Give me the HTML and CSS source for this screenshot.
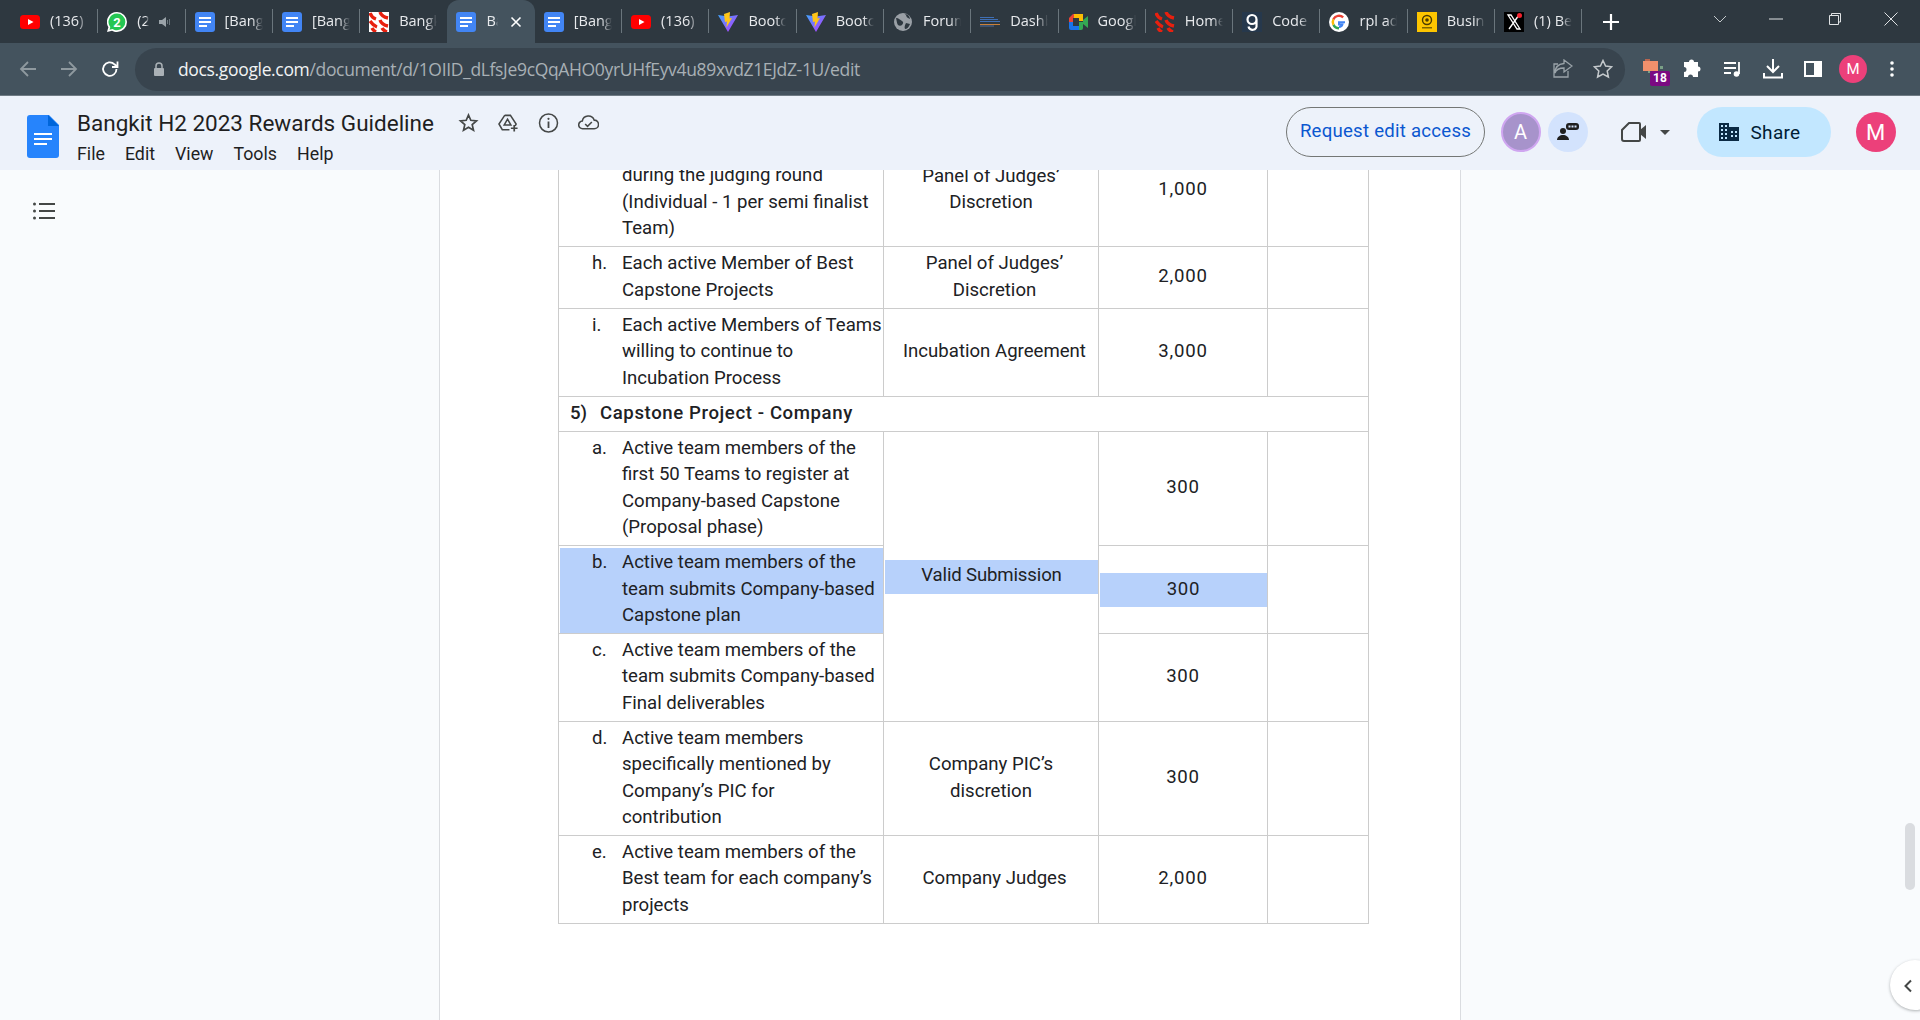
FILE: index.html
```html
<!DOCTYPE html>
<html lang="en">
<head>
<meta charset="utf-8">
<title>Bangkit H2 2023 Rewards Guideline</title>
<link rel="stylesheet" href="styles.css">
</head>
<body>
<svg class="defs" width="0" height="0" aria-hidden="true">
  <symbol id="f-yt" viewBox="0 0 20 20"><rect y="3" width="20" height="14" rx="3.5" fill="#f00"/><path d="M8 7l5.5 3L8 13z" fill="#fff"/></symbol>
  <symbol id="f-doc" viewBox="0 0 20 20"><rect width="20" height="20" rx="3" fill="#4285f4"/><path d="M4 5h12v2H4zM4 9h12v2H4zM4 13h8v2H4z" fill="#fff"/></symbol>
  <symbol id="f-vite" viewBox="0 0 20 20"><defs><linearGradient id="vg" x1="0" y1="0" x2="1" y2="1"><stop offset="0" stop-color="#41a5ff"/><stop offset="1" stop-color="#bd34fe"/></linearGradient></defs><path d="M0 3l10 1.5L20 3 10 20z" fill="url(#vg)"/><path d="M12 0L6 2l1 8 2-.5-.6 6L14 6l-2.500.5z" fill="#ffc517"/></symbol>
  <symbol id="f-x" viewBox="0 0 20 20"><rect width="20" height="20" fill="#000"/><path d="M4 3h3l9 14h-3zM15 3L5 17" fill="none" stroke="#fff" stroke-width="1.300"/><circle cx="15.500" cy="3.500" r="2.500" fill="#f4212e"/></symbol>
  <symbol id="f-bang" viewBox="0 0 20 20"><path d="M1 1c1 3 3 5 6 6M11 0c1 3 3 5 8 6M1 9c2 3 4 5 7 6M11 8c1 3 3 5 8 6M3 16c1 2 2 3 4 4M13 16c1 2 2 3 5 4" fill="none" stroke="#e8200f" stroke-width="3.400"/></symbol>
</svg>

<div class="tabstrip">
  <div class="tab"><svg class="fav"><use href="#f-yt"/></svg><span class="title">(136) YouTube</span></div>
  <div class="tab"><svg class="fav" viewBox="0 0 20 20"><path d="M10 0a10 10 0 0 1 0 20c-2 0-3.500-.5-5-1.300L0 20l1.400-4.800A10 10 0 0 1 10 0z" fill="#fff"/><path d="M10 1.600a8.300 8.300 0 0 1 0 16.700c-1.700 0-3.200-.5-4.500-1.300l-3 .8.800-2.900A8.300 8.300 0 0 1 10 1.600z" fill="#25c652"/><text x="10" y="14.500" class="wa">2</text></svg><span class="title short">(2) WhatsApp</span><svg class="speaker" viewBox="0 0 12 12"><path d="M0 4h3l4-3v10L3 8H0z" fill="#9aa3a9"/><path d="M8.500 4v4M10.500 3v6" stroke="#6b767d"/></svg></div>
  <div class="tab"><svg class="fav"><use href="#f-doc"/></svg><span class="title">[Bangkit</span></div>
  <div class="tab"><svg class="fav"><use href="#f-doc"/></svg><span class="title">[Bangkit</span></div>
  <div class="tab tab-nosep"><svg class="fav fav-white"><use href="#f-bang"/></svg><span class="title">Bangkit</span></div>
  <div class="tab tab-active"><svg class="fav"><use href="#f-doc"/></svg><span class="title short">Bangkit</span><svg class="close" viewBox="0 0 12 12"><path d="M1.500 1.500l9 9M10.500 1.500l-9 9" stroke="#fff" stroke-width="1.600"/></svg></div>
  <div class="tab"><svg class="fav"><use href="#f-doc"/></svg><span class="title">[Bangkit</span></div>
  <div class="tab"><svg class="fav"><use href="#f-yt"/></svg><span class="title">(136) YouTube</span></div>
  <div class="tab"><svg class="fav"><use href="#f-vite"/></svg><span class="title">Bootcamp</span></div>
  <div class="tab"><svg class="fav"><use href="#f-vite"/></svg><span class="title">Bootcamp</span></div>
  <div class="tab"><svg class="fav" viewBox="0 0 20 20"><circle cx="10" cy="10" r="9" fill="#9aa0a6"/><path d="M3 6c3 0 4 2 6 3s1 3 0 4-3 1-4 0-1-3-2-7zM12 2c2 2 1 3 3 4l2 1c0-2-2-5-5-5zM13 11l4 1c-1 3-3 5-5 5-1-2 0-4 1-6z" fill="#2e3840"/></svg><span class="title">Forum</span></div>
  <div class="tab"><svg class="fav" viewBox="0 0 20 20"><path d="M0 5h14v1H0zM0 7h18v1H0zM0 9h20v1H0z" fill="#3f6fb5"/><path d="M0 12h20v1H0z" fill="#c9803a"/><path d="M0 13.500h14v1H0z" fill="#4d6a9c"/></svg><span class="title">Dashboard</span></div>
  <div class="tab"><svg class="fav" viewBox="0 0 20 20"><path d="M5 2h9v4H5v4H1V6z" fill="#ea4335"/><path d="M11 2h4v7h-4V6H6V2z" fill="#fbbc04"/><path d="M1 10h4v4h6v4H3a2 2 0 0 1-2-2z" fill="#1a73e8"/><path d="M11 10h4v6a2 2 0 0 1-2 2h-2z" fill="#34a853"/><path d="M15 8l5-4v12l-5-4z" fill="#34a853"/><rect x="5" y="6" width="6" height="8" fill="#2e3840"/></svg><span class="title">Google Meet</span></div>
  <div class="tab"><svg class="fav"><use href="#f-bang"/></svg><span class="title">Home</span></div>
  <div class="tab"><svg class="fav" viewBox="0 0 20 20"><rect width="20" height="20" fill="#26384c"/><path d="M14.500 7.500a4.500 4.500 0 1 1-9 0 4.500 4.500 0 0 1 9 0zM14.500 7v6a4 4 0 0 1-8 1.500" fill="none" stroke="#fff" stroke-width="2.200"/></svg><span class="title">Code</span></div>
  <div class="tab"><svg class="fav" viewBox="0 0 20 20"><circle cx="10" cy="10" r="10" fill="#fff"/><path d="M16 10.200h-6v2.300h3.400c-.4 1.500-1.700 2.400-3.400 2.400" fill="none" stroke="#4285f4" stroke-width="2"/><path d="M10 14.900a5 5 0 0 1-4.600-3l-2 1.500A7.500 7.500 0 0 0 10 17.400z" fill="#34a853"/><path d="M5.400 11.900a5 5 0 0 1 0-3.800l-2-1.500a7.500 7.500 0 0 0 0 6.800z" fill="#fbbc05"/><path d="M5.400 8.100A5 5 0 0 1 13.300 6.200l1.700-1.700A7.500 7.500 0 0 0 3.400 6.600z" fill="#ea4335"/></svg><span class="title">rpl adalah</span></div>
  <div class="tab"><svg class="fav" viewBox="0 0 20 20"><rect width="20" height="20" fill="#fdc500"/><circle cx="10" cy="8" r="4.500" fill="none" stroke="#4a3a00" stroke-width="1.400"/><circle cx="10" cy="8" r="1.800" fill="#4a3a00"/><path d="M5 15h10v1.500H5z" fill="#7d6300"/></svg><span class="title">Business</span></div>
  <div class="tab"><svg class="fav"><use href="#f-x"/></svg><span class="title">(1) Beranda</span></div>
  <svg class="newtab" viewBox="0 0 16 16"><path d="M8 0v16M0 8h16" stroke="#fff" stroke-width="2.200"/></svg>
  <div class="winctl">
    <svg class="win-ico" viewBox="0 0 14 14"><path d="M1 4l6 6 6-6" fill="none" stroke="#c4c9cc"/></svg>
    <svg class="win-ico" viewBox="0 0 14 14"><path d="M0 7h14" stroke="#dfe2e4"/></svg>
    <svg class="win-ico" viewBox="0 0 14 14"><path d="M3.500 3V1.500h9V10H11M1.500 3.500h9v9h-9z" fill="none" stroke="#dfe2e4"/></svg>
    <svg class="win-ico" viewBox="0 0 14 14"><path d="M.5.500l13 13M13.500.500l-13 13" stroke="#dfe2e4"/></svg>
  </div>
</div>

<div class="toolbar">
  <svg class="nav" viewBox="0 0 18 18"><path d="M17 9H2M9 2L2 9l7 7" fill="none" stroke="#8f999f" stroke-width="1.800"/></svg>
  <svg class="nav" viewBox="0 0 18 18"><path d="M1 9h15M9 2l7 7-7 7" fill="none" stroke="#8f999f" stroke-width="1.800"/></svg>
  <svg class="nav" viewBox="0 0 18 18"><path d="M15.500 9A6.700 6.700 0 1 1 13.500 4.300L16 6.500M16.500 1.500v5.500H11" fill="none" stroke="#fff" stroke-width="1.800"/></svg>
  <div class="omnibox">
    <svg class="lock" viewBox="0 0 12 14"><path d="M3 6V4a3 3 0 0 1 6 0v2" fill="none" stroke="#aab1b6" stroke-width="1.500"/><rect x="1" y="6" width="10" height="8" rx="1" fill="#aab1b6"/></svg>
    <span class="url"><span class="host">docs.google.com</span>/document/d/1OIID_dLfsJe9cQqAHO0yrUHfEyv4u89xvdZ1EJdZ-1U/edit</span>
    <svg class="omni-ico" viewBox="0 0 20 20"><path d="M11 1l8 6-8 6V9C6 9 3 11 2 14c0-6 4-9 9-9.500zM15 12v6H1V5h4" fill="none" stroke="#9aa3a9" stroke-width="1.300"/></svg>
    <svg class="omni-ico" viewBox="0 0 20 20"><path d="M10 1.500l2.600 5.600 6 .7-4.400 4.200 1.200 6L10 15l-5.400 3 1.200-6L1.400 7.800l6-.7z" fill="none" stroke="#c4c9cc" stroke-width="1.500"/></svg>
  </div>
  <div class="ext">
    <svg class="ext-fav" viewBox="0 0 22 14"><path d="M2 0h5v2H2z" fill="#b9654f"/><rect y="2" width="15" height="10" fill="#f0906c"/><path d="M17 7h3v3h-3zM5 12h2v2H5z" fill="#7aa086"/></svg>
    <span class="ext-badge">18</span>
  </div>
  <svg class="tool t-puzzle" viewBox="0 0 20 20"><path d="M7 3a2.500 2.500 0 0 1 5 0h4v4.500a2.500 2.500 0 0 1 0 5V18h-5a2.500 2.500 0 0 0-5 0H2v-5a2.500 2.500 0 0 0 0-5V3z" fill="#fff"/></svg>
  <svg class="tool t-music" viewBox="0 0 20 20"><path d="M1 4h12M1 9h12M1 14h7" stroke="#fff" stroke-width="1.800"/><path d="M16 3v12" stroke="#fff" stroke-width="1.800"/><circle cx="13.500" cy="15" r="2.800" fill="#fff"/></svg>
  <svg class="tool t-down" viewBox="0 0 20 20"><path d="M10 0v12M4 7l6 6 6-6M1 14v4.500h18V14" fill="none" stroke="#fff" stroke-width="2"/></svg>
  <svg class="tool t-side" viewBox="0 0 18 18"><path fill-rule="evenodd" d="M0 1h18v16H0zM2 3v12h8V3z" fill="#fff"/></svg>
  <span class="tb-avatar">M</span>
  <svg class="tool t-dots" viewBox="0 0 4 16"><circle cx="2" cy="2" r="1.800" fill="#fff"/><circle cx="2" cy="8" r="1.800" fill="#fff"/><circle cx="2" cy="14" r="1.800" fill="#fff"/></svg>
</div>

<header class="docbar">
  <svg class="docicon" viewBox="0 0 32 43"><path d="M3 0h19l10 10v30a3 3 0 0 1-3 3H3a3 3 0 0 1-3-3V3a3 3 0 0 1 3-3z" fill="#2684fc"/><path d="M21 0l11 11H21z" fill="#0066da"/><path d="M7 18h18v2H7zM7 23h18v2H7zM7 28h13v2H7z" fill="#fff"/></svg>
  <div class="titlecol">
    <div class="titlerow">
      <span class="doctitle">Bangkit H2 2023 Rewards Guideline</span>
      <svg class="hico hico-star" viewBox="0 0 20 20"><path d="M10 2l2.300 5.300 5.700.5-4.300 3.800 1.300 5.600-5-3-5 3 1.300-5.600L2 7.800l5.700-.5z" fill="none" stroke="#444746" stroke-width="1.700"/></svg>
      <svg class="hico" viewBox="0 0 22 20"><path d="M7 2h6l6 9-1 2M7 2L1 11l3.500 6H12M10 6l-3.500 6h7z" fill="none" stroke="#444746" stroke-width="1.600"/><path d="M17 12v7M13.500 15.500h7" stroke="#444746" stroke-width="1.800"/></svg>
      <svg class="hico" viewBox="0 0 20 20"><circle cx="10" cy="10" r="9" fill="none" stroke="#444746" stroke-width="1.500"/><path d="M10 8.500V15" stroke="#444746" stroke-width="1.800"/><circle cx="10" cy="5.800" r="1.100" fill="#444746"/></svg>
      <svg class="hico" viewBox="0 0 22 18"><path d="M5 15a4 4 0 0 1-.5-8A6.500 6.500 0 0 1 17 6a4.500 4.500 0 0 1 0 9z" fill="none" stroke="#444746" stroke-width="1.600"/><path d="M7.500 10l2.500 2.500 4.500-4.500" fill="none" stroke="#444746" stroke-width="1.600"/></svg>
    </div>
    <nav class="menu"><span>File</span><span>Edit</span><span>View</span><span>Tools</span><span>Help</span></nav>
  </div>
  <button class="reqbtn">Request edit access</button>
  <span class="av av-a">A</span>
  <span class="av av-chat"><svg viewBox="0 0 24 20" width="24" height="20"><circle cx="7" cy="9" r="3" fill="#1f1f1f"/><path d="M1 18c0-3 3-5 6-5s6 2 6 5z" fill="#1f1f1f"/><rect x="10" y="1" width="13" height="7" rx="3" fill="#1f1f1f"/><path d="M12.500 3.500h2v2h-2zM15.500 3.500h2v2h-2zM18.500 3.500h2v2h-2z" fill="#d3e3fd"/></svg></span>
  <svg class="cam" viewBox="0 0 26 20"><path d="M8 1h10a1 1 0 0 1 1 1v16a1 1 0 0 1-1 1H3a2 2 0 0 1-2-2V8z" fill="none" stroke="#444746" stroke-width="2"/><path d="M19 8l6-5v14l-6-5z" fill="#444746"/></svg>
  <span class="caret"></span>
  <button class="sharebtn"><svg viewBox="0 0 20 18" width="20" height="18"><path fill-rule="evenodd" d="M0 0h10v4h10v14H0zM2 2v2h2V2zM6 2v2h2V2zM2 6v2h2V6zM6 6v2h2V6zM2 10v2h2v-2zM6 10v2h2v-2zM2 14v2h2v-2zM6 14v2h2v-2zM12 8v2h2V8zM16 8v2h2V8zM12 12v2h2v-2zM16 12v2h2v-2z" fill="#0b2a44"/></svg>Share</button>
  <span class="av av-m">M</span>
</header>

<main class="workspace">
  <svg class="outline" viewBox="0 0 22 18"><circle cx="1.500" cy="2" r="1.500" fill="#444746"/><circle cx="1.500" cy="9" r="1.500" fill="#444746"/><circle cx="1.500" cy="16" r="1.500" fill="#444746"/><path d="M6 2h16M6 9h16M6 16h16" stroke="#444746" stroke-width="2"/></svg>
  <div class="page">
    <table class="rewards">
      <colgroup><col class="c1"><col class="c2"><col class="c3"><col class="c4"></colgroup>
      <tr class="r115">
        <td class="item"><div class="li li-clipped"><span class="mk"></span><span>during the judging round<br>(Individual - 1 per semi finalist<br>Team)</span></div></td>
        <td class="mid">Panel of Judges’<br>Discretion</td><td class="num">1,000</td><td></td>
      </tr>
      <tr class="r62">
        <td class="item"><div class="li"><span class="mk">h.</span><span>Each active Member of Best<br>Capstone Projects</span></div></td>
        <td class="mid shift">Panel of Judges’<br>Discretion</td><td class="num">2,000</td><td></td>
      </tr>
      <tr class="r88">
        <td class="item"><div class="li"><span class="mk">i.</span><span>Each active Members of Teams<br>willing to continue to<br>Incubation Process</span></div></td>
        <td class="mid shift">Incubation Agreement</td><td class="num">3,000</td><td></td>
      </tr>
      <tr class="r35">
        <td class="section" colspan="4"><span class="sec-n">5)</span>Capstone Project - Company</td>
      </tr>
      <tr class="r114">
        <td class="item"><div class="li"><span class="mk">a.</span><span>Active team members of the<br>first 50 Teams to register at<br>Company-based Capstone<br>(Proposal phase)</span></div></td>
        <td class="mid flush" rowspan="3"><span class="hl hl-mid">Valid Submission</span></td><td class="num">300</td><td></td>
      </tr>
      <tr class="r88">
        <td class="item item-hl"><div class="li"><span class="mk">b.</span><span>Active team members of the<br>team submits Company-based<br>Capstone plan</span></div></td>
        <td class="num flush"><span class="hl hl-num">300</span></td><td></td>
      </tr>
      <tr class="r88">
        <td class="item"><div class="li"><span class="mk">c.</span><span>Active team members of the<br>team submits Company-based<br>Final deliverables</span></div></td>
        <td class="num">300</td><td></td>
      </tr>
      <tr class="r114">
        <td class="item"><div class="li"><span class="mk">d.</span><span>Active team members<br>specifically mentioned by<br>Company’s PIC for<br>contribution</span></div></td>
        <td class="mid">Company PIC’s<br>discretion</td><td class="num">300</td><td></td>
      </tr>
      <tr class="r88">
        <td class="item"><div class="li"><span class="mk">e.</span><span>Active team members of the<br>Best team for each company’s<br>projects</span></div></td>
        <td class="mid shift">Company Judges</td><td class="num">2,000</td><td></td>
      </tr>
    </table>
  </div>
  <span class="scrollthumb"></span>
  <span class="sidetoggle"><svg viewBox="0 0 10 14" width="10" height="14"><path d="M8 1.500L2.500 7 8 12.500" fill="none" stroke="#444746" stroke-width="2"/></svg></span>
</main>
</body>
</html>
```

FILE: styles.css
```css
* { box-sizing: border-box; }
html, body { margin: 0; height: 100%; }
body {
  width: 1920px;
  height: 1020px;
  overflow: hidden;
  display: flex;
  flex-direction: column;
  background: #f9fbfd;
  font-family: "Roboto", "Liberation Sans", sans-serif;
  color: #1f1f1f;
}
.defs { position: absolute; }

/* tab strip */
.tabstrip {
  flex: 0 0 43px;
  display: flex;
  padding-left: 11px;
  background: #2e3840;
  font-family: "Open Sans", sans-serif;
  font-size: 14.5px;
  color: #e8eaed;
}
.tab {
  position: relative;
  flex: 0 0 87.3px;
  height: 43px;
  display: flex;
  align-items: center;
  padding-left: 9px;
}
.tab::after {
  content: "";
  position: absolute;
  right: 0;
  top: 9px;
  width: 1px;
  height: 24px;
  background: #6a757c;
}
.tab-nosep::after, .tab-active::after { display: none; }
.tab-active { background: #44535e; border-radius: 12px 12px 0 0; }
.fav { flex: 0 0 20px; width: 20px; height: 20px; }
.fav-white { background: #fff; }
.wa { font: 700 13px "Roboto", sans-serif; fill: #fff; text-anchor: middle; }
.title {
  margin: -2px 0 0 10px;
  width: 38px;
  overflow: hidden;
  white-space: nowrap;
  -webkit-mask-image: linear-gradient(to right, #000 72%, transparent);
  mask-image: linear-gradient(to right, #000 72%, transparent);
}
.title.short { width: 12px; }
.speaker { width: 12px; height: 12px; margin-left: 10px; }
.close { width: 12px; height: 12px; margin-left: 12px; }
.newtab { width: 16px; height: 16px; margin-left: 21px; align-self: center; }
.winctl { margin-left: 94px; display: flex; align-items: center; gap: 42px; align-self: flex-start; padding-top: 12px; }
.win-ico { width: 14px; height: 14px; }
.winctl .win-ico:nth-child(2) { margin-right: 3px; }

/* toolbar */
.toolbar {
  flex: 0 0 53px;
  display: flex;
  align-items: center;
  padding-left: 19px;
  background: #44535e;
  border-bottom: 1px solid #6f7b84;
}
.nav { width: 18px; height: 18px; margin-right: 23px; }
.omnibox {
  margin-left: -7px;
  width: 1490px;
  height: 43px;
  flex: none;
  display: flex;
  align-items: center;
  padding-left: 18px;
  border-radius: 22px;
  background: #38444e;
}
.lock { width: 12px; height: 14px; flex: none; }
.url {
  margin-left: 13px;
  width: 1381px;
  flex: none;
  font-family: "Open Sans", sans-serif;
  font-size: 17.5px;
  letter-spacing: -0.34px;
  white-space: nowrap;
  color: #a8b0b5;
}
.host { color: #f1f3f4; }
.omni-ico { width: 20px; height: 20px; flex: none; margin-left: -6px; margin-right: 26px; }
.ext { position: relative; width: 27px; height: 27px; margin: 6px 0 0 18px; flex: none; }
.ext-fav { position: absolute; left: 0; top: 0; width: 22px; height: 14px; }
.ext-badge {
  position: absolute;
  left: 7px;
  top: 12px;
  width: 20px;
  height: 15px;
  border-radius: 2px;
  background: #7b0a82;
  color: #fff;
  font: 700 12px/15px "Roboto", sans-serif;
  text-align: center;
}
.tool { flex: none; width: 20px; height: 20px; }
.t-puzzle { margin-left: 12px; }
.t-music { margin-left: 21px; }
.t-down { margin-left: 20px; }
.t-side { margin-left: 21px; width: 18px; height: 18px; }
.tb-avatar {
  flex: none;
  width: 28px;
  height: 28px;
  margin-left: 17px;
  border-radius: 50%;
  background: #ec407a;
  color: #fff;
  font-size: 15px;
  line-height: 28px;
  text-align: center;
}
.t-dots { margin-left: 23px; width: 4px; height: 16px; }

/* docs header */
.docbar {
  flex: 0 0 74px;
  display: flex;
  align-items: center;
  padding: 0 0 2px 27px;
  background: #edf2fa;
}
.docicon { width: 32px; height: 43px; flex: none; margin-top: 8px; }
.titlecol { margin: 6px 0 0 18px; width: 1209px; flex: none; }
.titlerow { display: flex; align-items: center; height: 32px; }
.doctitle { font-size: 22.5px; width: 381px; white-space: nowrap; color: #1f1f1f; }
.hico { width: 21px; height: 20px; margin-right: 19px; flex: none; }
.menu { display: flex; gap: 20px; margin-top: 4px; font-size: 17.8px; color: #1f1f1f; }
.reqbtn {
  flex: none;
  width: 199px;
  height: 50px;
  border: 1px solid #747775;
  border-radius: 25px;
  background: transparent;
  color: #0b57d0;
  font: 400 18.6px "Roboto", sans-serif;
  letter-spacing: .25px;
  padding: 0 0 2px;
}
.av {
  flex: none;
  width: 40px;
  height: 40px;
  border-radius: 50%;
  display: flex;
  align-items: center;
  justify-content: center;
  font-size: 20px;
}
.av-a { margin-left: 15.500px; background: #a793cb; border: 2px solid #cfa6f0; color: #fff; }
.av-chat { margin-left: 7px; background: #d3e3fd; }
.cam { width: 26px; height: 20px; margin-left: 33px; flex: none; }
.caret {
  flex: none;
  margin-left: 13px;
  width: 0;
  height: 0;
  border: 5px solid transparent;
  border-top: 5px solid #444746;
  border-bottom: 0;
}
.sharebtn {
  flex: none;
  margin-left: 27px;
  width: 134px;
  height: 50px;
  border: 0;
  border-radius: 25px;
  background: #c2e7ff;
  color: #001d35;
  font: 400 19px "Roboto", sans-serif;
  letter-spacing: .3px;
  display: flex;
  align-items: center;
  justify-content: center;
  gap: 12px;
  padding: 0 8px 0 0;
}
.av-m { margin-left: 25px; background: #ec407a; color: #fff; font-size: 22px; }

/* workspace */
.workspace { position: relative; flex: 1; min-height: 0; overflow: hidden; }
.outline { position: absolute; left: 33px; top: 32px; width: 22px; height: 18px; }
.page {
  margin-left: 439px;
  width: 1022px;
  height: 100%;
  background: #fff;
  border-left: 1px solid #dadce0;
  border-right: 1px solid #dadce0;
  overflow: hidden;
}
.rewards {
  margin: -39px 0 0 118px;
  width: 810px;
  table-layout: fixed;
  border-collapse: collapse;
  font-size: 18.6px;
  line-height: 26.5px;
  color: #202124;
}
.c1 { width: 325px; }
.c2 { width: 215px; }
.c3 { width: 169px; }
.c4 { width: 101px; }
.rewards td { border: 1px solid #ccc; padding: 0 0 2px; vertical-align: middle; white-space: nowrap; }
.rewards .r115 td { padding-bottom: 0; }
.r35 { height: 35px; }
.r62 { height: 62px; }
.r88 { height: 88px; }
.r114 { height: 114px; }
.r115 { height: 115px; }
.li { display: flex; }
.li-clipped { padding-top: 26px; }
.mk { flex: 0 0 30px; margin-left: 33px; }
.mid { text-align: center; }
.mid.shift { padding-left: 7px; }
.num { text-align: center; letter-spacing: .8px; }
.rewards .section { padding-left: 11px; font-weight: 500; letter-spacing: .6px; }
.sec-n { display: inline-block; width: 30px; letter-spacing: 0; }
.rewards .item-hl { padding: 2px 0 0 1px; }
.item-hl .li { height: 85px; align-items: flex-start; padding-top: 1px; background: #b7d1fb; }
.item-hl .mk { margin-left: 32px; }
.rewards .flush { padding: 0; }
.hl { display: block; background: #b7d1fb; height: 34px; margin-left: 1px; }
.hl-mid { line-height: 30px; letter-spacing: -.15px; }
.hl-num { line-height: 32px; letter-spacing: .8px; }

.scrollthumb { position: absolute; left: 1905px; top: 653px; width: 10px; height: 67px; border-radius: 5px; background: #dadce0; }
.sidetoggle {
  position: absolute;
  left: 1890px;
  top: 790px;
  width: 50px;
  height: 50px;
  padding: 18px 0 0 13px;
  border-radius: 50%;
  background: #fff;
  box-shadow: 0 1px 3px rgba(60, 64, 67, .4);
}
```
